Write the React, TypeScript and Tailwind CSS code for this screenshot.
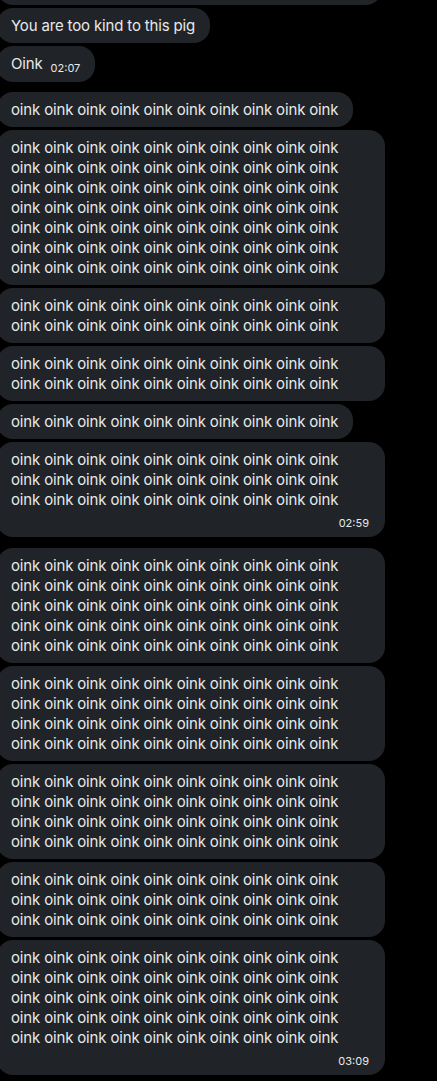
const row = "oink oink oink oink oink oink oink oink oink oink";

type Msg = {
  text: string;
  wide?: boolean;
  time?: string;
  inlineTime?: string;
  gapBefore?: string;
};

const block = (n: number) => Array(n).fill(row).join("\n");

const messages: Msg[] = [
  { text: "You are too kind to this pig" },
  { text: "Oink", inlineTime: "02:07" },
  { text: row, gapBefore: "mt-[7px]" },
  { text: block(7), wide: true },
  { text: block(2), wide: true },
  { text: block(2), wide: true },
  { text: row },
  { text: block(3), wide: true, time: "02:59" },
  { text: block(5), wide: true, gapBefore: "mt-[8px]" },
  { text: block(4), wide: true },
  { text: block(4), wide: true },
  { text: block(3), wide: true },
  { text: block(5), wide: true, time: "03:09" },
];

function Bubble({ text, wide, time, inlineTime, gapBefore }: Msg) {
  return (
    <div
      className={`ml-[-3px] rounded-2xl bg-[#202327] pl-[14px] pr-[15px] pt-2 pb-[7px] ${
        wide ? "w-[388px]" : "w-fit"
      } ${gapBefore ?? ""}`}
    >
      <p className="whitespace-pre-line text-[15px] leading-5 tracking-[-0.16px] text-[#e7e9ea]">
        {text}
        {inlineTime && (
          <span className="relative top-[3px] ml-2 text-[11px] tracking-normal text-[#e7e9ea]">
            {inlineTime}
          </span>
        )}
      </p>
      {time && (
        <div className="mt-[6px] pr-[1px] text-right text-[11px] leading-[14px] text-[#e7e9ea]">
          {time}
        </div>
      )}
    </div>
  );
}

export default function App() {
  return (
    <div
      className="h-[1081px] w-[437px] overflow-hidden bg-black"
      style={{ fontFamily: "Inter, 'Noto Sans', sans-serif" }}
    >
      <div className="flex flex-col gap-[3px]">
        {/* tail of the previous message, scrolled off the top */}
        <div className="ml-[-3px] mt-[-50px] h-[55px] w-[385px] rounded-2xl bg-[#202327]" />
        {messages.map((m, i) => (
          <Bubble key={i} {...m} />
        ))}
      </div>
    </div>
  );
}
